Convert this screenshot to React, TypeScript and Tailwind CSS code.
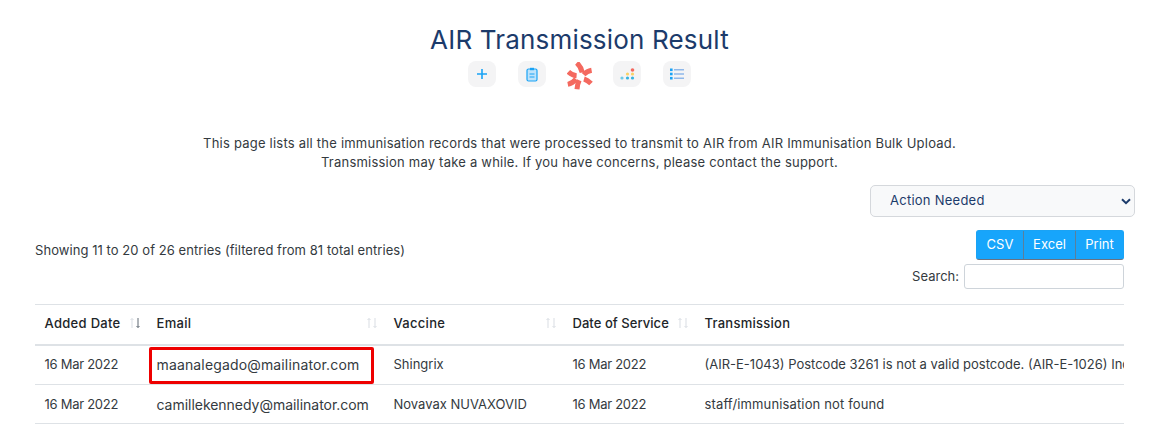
import React from "react";

const SortIcon = ({ active }: { active?: boolean }) => (
  <svg width="12" height="12" viewBox="0 0 12 12" className="shrink-0" fill="none" strokeWidth="1">
    <path d="M3 11V1.5M1.5 3L3 1.5L4.5 3" stroke="#d9dde3" />
    <path d="M9 1v9.5M7.5 9L9 10.5L10.5 9" stroke={active ? "#5f6872" : "#d9dde3"} />
  </svg>
);

const IconBox = ({ children }: { children: React.ReactNode }) => (
  <div className="flex h-[26px] w-[28px] items-center justify-center rounded-lg bg-[#f4f4f5]">{children}</div>
);

const Logo = () => (
  <svg width="26" height="28" viewBox="0 0 26 28" fill="none" stroke="#f4695f" strokeWidth="5" className="-ml-[1px] -mr-[2px] mt-[3px]">
    <path d="M9.8 0.8Q14 4.5 15.2 10.5" />
    <path d="M24.6 8.2Q20 9 16.6 12.6" />
    <path d="M24 21.6Q20.5 18 17 17" />
    <path d="M10 27.2Q10.4 22 12.2 18.2" />
    <path d="M0.8 22.4Q5.5 21.5 9 17.2" />
    <path d="M1.4 9.8Q5.5 13.5 9.6 13.8" />
  </svg>
);

const Th = ({ label, className, active, tracking }: { label: string; className: string; active?: boolean; tracking: string }) => (
  <th className={`h-[40px] pb-[2px] pl-[9.5px] pr-[6px] text-left font-medium ${className}`}>
    <div className="flex items-center justify-between gap-1 text-[#212529]">
      <span className={tracking}>{label}</span>
      <SortIcon active={active} />
    </div>
  </th>
);

const rows = [
  {
    added: "16 Mar 2022",
    email: "maanalegado@mailinator.com",
    emailClass: "text-[14px] tracking-[0.15px]",
    vaccine: "Shingrix",
    service: "16 Mar 2022",
    note: "(AIR-E-1043) Postcode 3261 is not a valid postcode. (AIR-E-1026) Individual details could not be identified",
    noteClass: "",
    rowClass: "h-[39.5px]",
  },
  {
    added: "16 Mar 2022",
    email: "camillekennedy@mailinator.com",
    emailClass: "text-[14px] tracking-[-0.03px]",
    vaccine: "Novavax NUVAXOVID",
    service: "16 Mar 2022",
    note: "staff/immunisation not found",
    noteClass: "tracking-[0.14px]",
    rowClass: "h-[39px] [&>td]:pt-[2px]",
  },
];

export default function App() {
  return (
    <div className="h-[425px] overflow-hidden bg-white pl-[35px] pr-[29px] font-['Inter',sans-serif] text-[13px] text-[#343a40]">
      <h1 className="pt-[22px] text-center text-[26px] leading-[36px] font-normal tracking-[0.18px] text-[#1c3b6b]">AIR Transmission Result</h1>
      <div className="mt-[1px] flex h-[30px] items-center justify-center gap-[22px]">
        <IconBox>
          <svg width="12" height="12" viewBox="0 0 12 12" stroke="#1aa3f5" strokeWidth="1.6"><path d="M6 1v10M1 6h10" /></svg>
        </IconBox>
        <IconBox>
          <svg width="12" height="15" viewBox="0 0 12 15" fill="#bfe3fb" stroke="#1aa3f5" strokeWidth="1.2">
            <rect x="1" y="2" width="10" height="12" rx="1.5" />
            <rect x="4" y="0.8" width="4" height="2.4" fill="#1aa3f5" stroke="none" />
            <path d="M3.5 7h5M3.5 10h5" strokeWidth="1" />
          </svg>
        </IconBox>
        <Logo />
        <IconBox>
          <svg width="15" height="12" viewBox="0 0 15 12">
            <circle cx="12.5" cy="2" r="1.8" fill="#f4695f" />
            <circle cx="12.5" cy="6" r="1.6" fill="#fbd268" />
            <circle cx="7.5" cy="6" r="1.6" fill="#fbd268" />
            <circle cx="2" cy="10" r="1.6" fill="#6fcbe8" />
            <circle cx="7.5" cy="10" r="1.6" fill="#35b3e0" />
            <circle cx="12.5" cy="10" r="1.6" fill="#35b3e0" />
          </svg>
        </IconBox>
        <IconBox>
          <svg width="14" height="12" viewBox="0 0 14 12">
            <rect x="0" y="0.5" width="2.6" height="2.6" fill="#1aa3f5" />
            <rect x="0" y="4.7" width="2.6" height="2.6" fill="#1aa3f5" />
            <rect x="0" y="8.9" width="2.6" height="2.6" fill="#1aa3f5" />
            <path d="M4 1.8h10M4 6h10M4 10.2h10" stroke="#8fb8ea" strokeWidth="1.6" />
          </svg>
        </IconBox>
      </div>
      <div className="mt-[45px] text-center text-[13px] leading-[19px] tracking-[0.22px]">
        <p>This page lists all the immunisation records that were processed to transmit to AIR from AIR Immunisation Bulk Upload.</p>
        <p>Transmission may take a while. If you have concerns, please contact the support.</p>
      </div>
      <div className="-mr-[11px] mt-[13px] flex justify-end">
        <div className="relative">
          <select className="block h-[32px] w-[265px] appearance-none rounded-[5px] border border-[#d5d8dc] bg-[#f8f9fa] pb-[1px] pl-[19px] text-[13px] tracking-[0.25px] text-[#1c3b6b]" defaultValue="Action Needed">
            <option>Action Needed</option>
          </select>
          <svg width="10" height="7" viewBox="0 0 10 7" fill="none" stroke="#1c3b6b" strokeWidth="2" className="pointer-events-none absolute top-[13px] right-[4px]">
            <path d="M1 1.2l4 4 4-4" />
          </svg>
        </div>
      </div>
      <div className="mt-[13px] flex items-start justify-between">
        <div className="pt-[11px] leading-[19px] tracking-[0.06px]">Showing 11 to 20 of 26 entries (filtered from 81 total entries)</div>
        <div className="flex flex-col items-end">
          <div className="flex h-[30px] overflow-hidden rounded-[3px] border border-[#1aa3f5] border-b-[#6b7280] bg-[#17a5fb] text-white">
            <span className="flex w-[47px] items-center justify-center border-r border-[#5b7f9b]">CSV</span>
            <span className="flex w-[52px] items-center justify-center border-r border-[#5b7f9b]">Excel</span>
            <span className="flex w-[47px] items-center justify-center">Print</span>
          </div>
          <div className="mt-[4px] flex items-center gap-[5px]">
            <span>Search:</span>
            <div className="h-[25px] w-[160px] rounded-[3px] border border-[#ced4da] bg-white" />
          </div>
        </div>
      </div>
      <div className="relative mt-[15px] overflow-hidden">
        <table className="w-[1400px] table-fixed border-collapse whitespace-nowrap">
          <thead>
            <tr className="border-t border-b-2 border-t-[#dee2e6] border-b-[#dee2e6]">
              <Th label="Added Date" className="w-[112px]" tracking="tracking-[0.3px]" active />
              <Th label="Email" className="w-[237px]" tracking="tracking-[0.3px]" />
              <Th label="Vaccine" className="w-[179px]" tracking="tracking-[0.3px]" />
              <Th label="Date of Service" className="w-[132px]" tracking="tracking-[0.05px]" />
              <th className="pb-[2px] pl-[9.5px] text-left font-medium tracking-[0.25px] text-[#212529]">Transmission</th>
            </tr>
          </thead>
          <tbody>
            {rows.map((row) => (
              <tr key={row.email} className={`${row.rowClass} border-b border-[#dee2e6]`}>
                <td className="pl-[9.5px] tracking-[-0.27px]">{row.added}</td>
                <td className={`pl-[9.5px] ${row.emailClass}`}>{row.email}</td>
                <td className="pl-[9.5px]">{row.vaccine}</td>
                <td className="pl-[9.5px] tracking-[-0.27px]">{row.service}</td>
                <td className={`overflow-hidden pl-[9.5px] ${row.noteClass}`}>{row.note}</td>
              </tr>
            ))}
          </tbody>
        </table>
        <div className="absolute top-[43px] left-[114px] h-[37px] w-[225px] rounded-[2px] border-[3px] border-[#ee0000]" />
      </div>
    </div>
  );
}
